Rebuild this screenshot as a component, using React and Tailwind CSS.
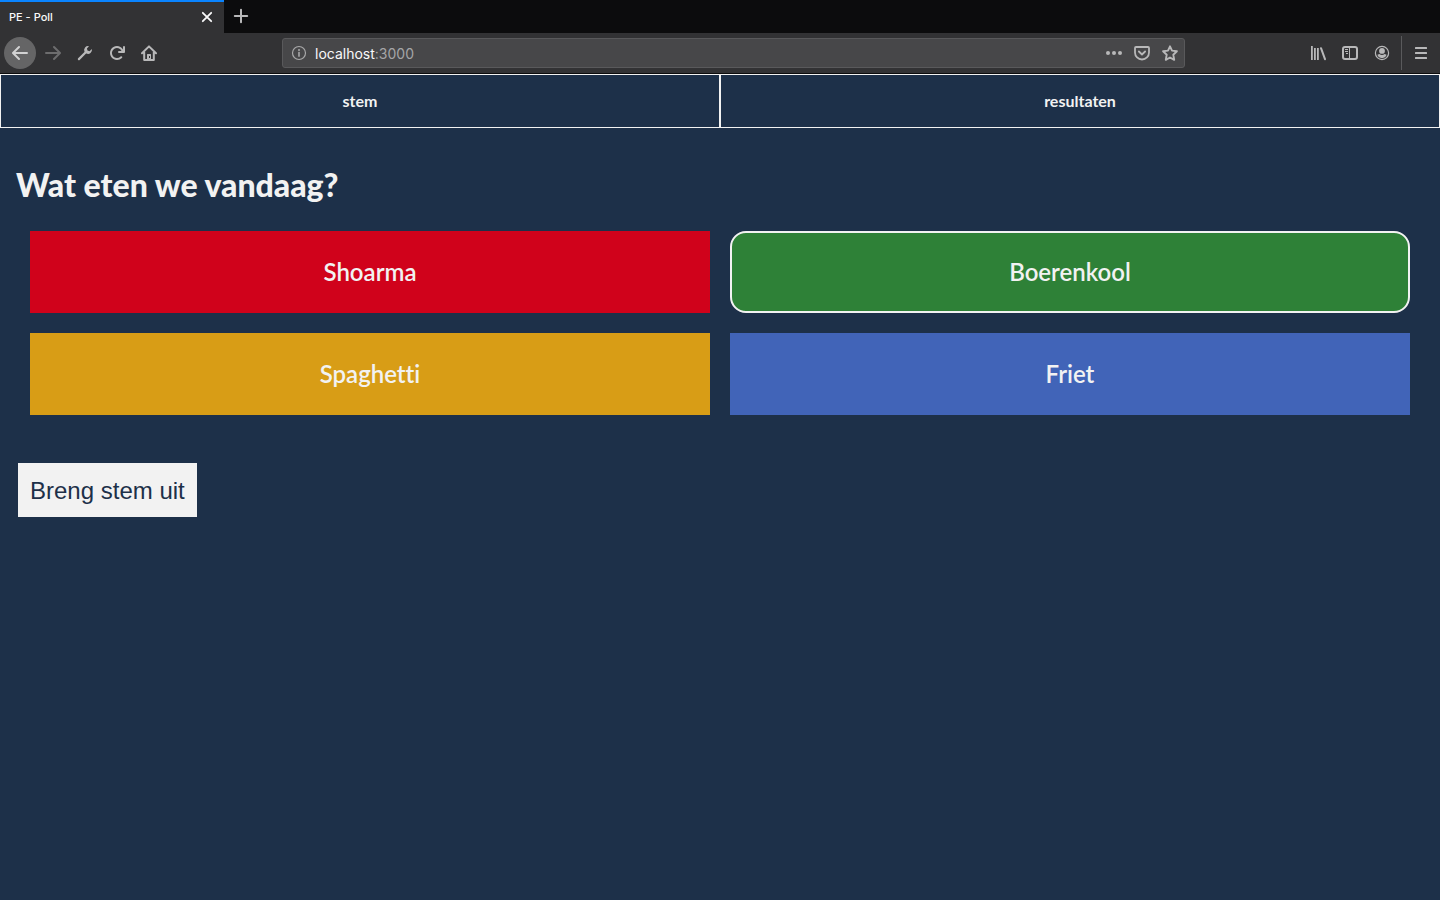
import { useState } from "react";

const options = [
  { name: "Shoarma", color: "bg-[#d0021b]" },
  { name: "Boerenkool", color: "bg-[#2e8137]" },
  { name: "Spaghetti", color: "bg-[#d89d16]" },
  { name: "Friet", color: "bg-[#4164b8]" },
];

function Icon({ children, className = "text-[#b8b8b9]" }) {
  return (
    <svg viewBox="0 0 16 16" className={`size-4 ${className}`} fill="currentColor" aria-hidden="true">
      {children}
    </svg>
  );
}

function ToolButton({ label, children }) {
  return (
    <button type="button" aria-label={label} className="flex size-8 items-center justify-center">
      {children}
    </button>
  );
}

const arrow =
  "M15 7H3.414l4.293-4.293a1 1 0 0 0-1.414-1.414l-6 6a1 1 0 0 0 0 1.414l6 6a1 1 0 0 0 1.414-1.414L3.414 9H15a1 1 0 0 0 0-2z";

function TabStrip() {
  return (
    <div className="flex h-[33px] bg-[#0c0c0d]">
      <div className="flex w-56 items-center justify-between border-t-2 border-[#0a84ff] bg-[#323234] pr-2 pl-[9px]">
        <span className="font-[Inter,sans-serif] text-[11px] font-medium text-[#f9f9fa]">PE - Poll</span>
        <button type="button" aria-label="Tabblad sluiten" className="flex size-[18px] items-center justify-center">
          <Icon className="text-[#f9f9fa]">
            <path d="M3.8 2.8l8.4 8.4m0-8.4l-8.4 8.4" fill="none" stroke="currentColor" strokeWidth="1.8" strokeLinecap="round" />
          </Icon>
        </button>
      </div>
      <button type="button" aria-label="Nieuw tabblad" className="flex h-8 w-[34px] items-center justify-center">
        <Icon>
          <path d="M8 1.8v12.4M1.8 8h12.4" fill="none" stroke="currentColor" strokeWidth="2" strokeLinecap="round" />
        </Icon>
      </button>
    </div>
  );
}

function Toolbar() {
  return (
    <div className="flex h-[41px] items-center border-b border-[#0c0c0d] bg-[#323234] pl-1">
      <div className="flex items-center">
        <button
          type="button"
          aria-label="Vorige"
          className="flex size-8 items-center justify-center rounded-full bg-[#656566]"
        >
          <Icon className="text-[#d2d2d3]">
            <path d={arrow} />
          </Icon>
        </button>
        <div className="flex pl-px">
          <ToolButton label="Volgende">
            <Icon className="rotate-180 text-[#6d6d6e]">
              <path d={arrow} />
            </Icon>
          </ToolButton>
          <ToolButton label="Ontwikkelaar">
            <Icon>
              <path d="M1.9 14.1L8.5 7.5" fill="none" stroke="currentColor" strokeWidth="2.2" strokeLinecap="round" />
              <path d="M14.9 4.1l-2.4 2.1-2-.6-.6-2L12 1.200a4 4 0 0 0-4.600 5.400l2 2a4 4 0 0 0 5.500-4.500z" />
            </Icon>
          </ToolButton>
          <ToolButton label="Vernieuwen">
            <Icon>
              <path d="M15 1a1 1 0 0 0-1 1v2.418A6.995 6.995 0 1 0 8 15a6.954 6.954 0 0 0 4.95-2.05 1 1 0 0 0-1.414-1.414A5.019 5.019 0 1 1 12.549 6H10a1 1 0 0 0 0 2h5a1 1 0 0 0 1-1V2a1 1 0 0 0-1-1z" />
            </Icon>
          </ToolButton>
          <ToolButton label="Startpagina">
            <Icon>
              <path
                d="M1 8.3L8 1.4l7 6.9M3.2 7.2V15h9.6V7.2"
                fill="none"
                stroke="currentColor"
                strokeWidth="2"
                strokeLinecap="round"
                strokeLinejoin="round"
              />
              <path fillRule="evenodd" d="M6 15V9.5a.5.5 0 0 1 .5-.5h3a.5.5 0 0 1 .5.5V15zm2-4h1v2H8z" />
            </Icon>
          </ToolButton>
        </div>
      </div>
      <div className="flex min-w-0 flex-1 px-[117px]">
        <div className="flex h-[30px] flex-1 items-center rounded-[3px] border border-[#59595b] bg-[#474749] pr-1.5 pl-2">
          <Icon className="text-[#a9a9aa]">
            <circle cx="8" cy="8" r="6.5" fill="none" stroke="currentColor" strokeWidth="1.2" />
            <circle cx="8" cy="4.9" r="1" />
            <rect x="7.2" y="6.8" width="1.6" height="5" rx=".6" />
          </Icon>
          <div className="flex-1 pt-0.5 pl-2 font-[Inter,sans-serif] text-sm text-[#a5a5a7]">
            <span className="text-[#f9f9fa]">localhost</span>:3000
          </div>
          <div className="flex gap-3">
            <button type="button" aria-label="Pagina-acties">
              <Icon>
                <circle cx="2" cy="8" r="2" />
                <circle cx="8" cy="8" r="2" />
                <circle cx="14" cy="8" r="2" />
              </Icon>
            </button>
            <button type="button" aria-label="Opslaan naar Pocket">
              <Icon>
                <path
                  d="M2 2h12a1 1 0 0 1 1 1v4.500a7 7 0 0 1-14 0V3a1 1 0 0 1 1-1z"
                  fill="none"
                  stroke="currentColor"
                  strokeWidth="1.8"
                />
                <path
                  d="M4.9 6.5L8 9.500l3.100-3"
                  fill="none"
                  stroke="currentColor"
                  strokeWidth="1.8"
                  strokeLinecap="round"
                  strokeLinejoin="round"
                />
              </Icon>
            </button>
            <button type="button" aria-label="Bladwijzer maken">
              <Icon>
                <path
                  d="M8 1.300l2 4.300 4.900.6-3.600 3.500.9 5.100L8 12.500l-4.200 2.300.9-5.100L1.100 6.200 6 5.600z"
                  fill="none"
                  stroke="currentColor"
                  strokeWidth="1.9"
                  strokeLinejoin="round"
                />
              </Icon>
            </button>
          </div>
        </div>
      </div>
      <div className="flex items-center">
        <ToolButton label="Bibliotheek">
          <Icon>
            <path d="M1 1h1.800v14H1zM4 3h1.800v12H4zM7 3h1.800v12H7z" />
            <path d="M11 3.200l4 11" fill="none" stroke="currentColor" strokeWidth="2" strokeLinecap="round" />
          </Icon>
        </ToolButton>
        <ToolButton label="Zijbalken tonen">
          <Icon>
            <rect x="1" y="2" width="14" height="12" rx="2" fill="none" stroke="currentColor" strokeWidth="2" />
            <path d="M7 2h1v12H7zM3 4h3v1H3zM3 6h3v1H3zM4 8h2v1H4z" />
          </Icon>
        </ToolButton>
        <ToolButton label="Account">
          <Icon>
            <circle cx="8" cy="8" r="6.6" fill="none" stroke="currentColor" strokeWidth="1.2" />
            <circle cx="8" cy="5.9" r="2.9" />
            <path d="M3.400 9.800l2-.9a4 4 0 0 0 5.200 0l2 .9A5.200 5.200 0 0 1 8 13.200a5.200 5.200 0 0 1-4.600-3.400z" />
          </Icon>
        </ToolButton>
        <div className="ml-[3px] flex h-[34px] items-center border-l border-[#5a5a5c] px-[3px]">
          <ToolButton label="Menu openen">
            <Icon>
              <rect x="2" y="2" width="12" height="2" rx=".5" />
              <rect x="2" y="7" width="12" height="2" rx=".5" />
              <rect x="2" y="12" width="12" height="2" rx=".5" />
            </Icon>
          </ToolButton>
        </div>
      </div>
    </div>
  );
}

export default function App() {
  const [choice, setChoice] = useState("Boerenkool");

  return (
    <div className="flex min-h-screen flex-col bg-[#1d3049] font-[Lato,sans-serif] text-[#f2f2f2]">
      <header>
        <TabStrip />
        <Toolbar />
      </header>
      <nav className="grid grid-cols-2 text-center text-base leading-6 font-bold">
        <a href="#stem" className="border border-[#f2f2f2] py-[14px]">
          stem
        </a>
        <a href="#resultaten" className="border border-[#f2f2f2] py-[14px]">
          resultaten
        </a>
      </nav>
      <main className="pt-9">
        <h1 className="px-4 text-[32px] leading-[42px] font-black">Wat eten we vandaag?</h1>
        <div className="grid grid-cols-2 gap-5 px-[30px] pt-[25px]">
          {options.map(({ name, color }) => (
            <button
              key={name}
              type="button"
              aria-pressed={choice === name}
              onClick={() => setChoice(name)}
              className={`h-[82px] text-2xl font-semibold [font-variant-ligatures:none] ${color} ${
                choice === name ? "rounded-2xl border-2 border-[#f2f2f2]" : ""
              }`}
            >
              {name}
            </button>
          ))}
        </div>
        <button
          type="button"
          className="mt-12 ml-[18px] h-[54px] bg-[#f2f2f2] px-3 pt-0.5 font-['Liberation_Sans',sans-serif] text-2xl text-[#1d3049]"
        >
          Breng stem uit
        </button>
      </main>
    </div>
  );
}
